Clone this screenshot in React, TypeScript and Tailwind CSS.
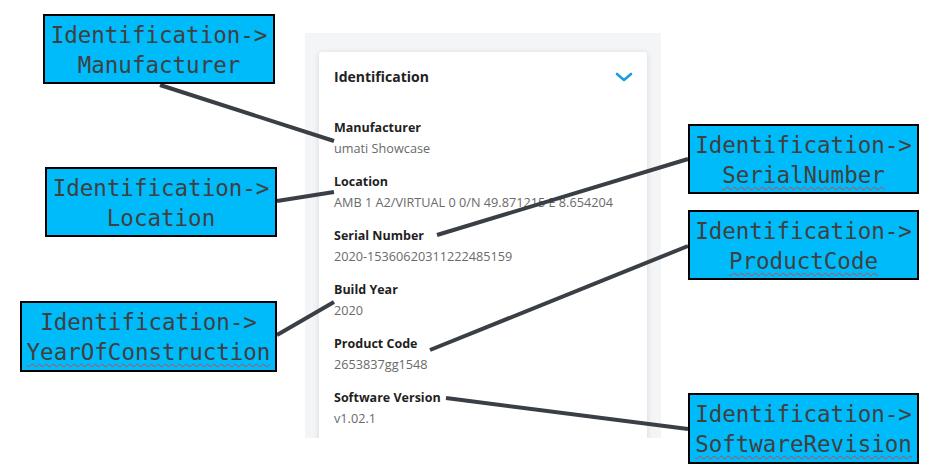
import React from "react";

type Callout = {
  left: number;
  top: number;
  width: number;
  height: number;
  field: string;
  squiggle: boolean;
};

const callouts: Callout[] = [
  { left: 43, top: 14, width: 232, height: 70, field: "Manufacturer", squiggle: false },
  { left: 45, top: 167, width: 232, height: 70, field: "Location", squiggle: false },
  { left: 20, top: 301, width: 257, height: 71, field: "YearOfConstruction", squiggle: true },
  { left: 688, top: 124, width: 231, height: 70, field: "SerialNumber", squiggle: true },
  { left: 688, top: 210, width: 231, height: 70, field: "ProductCode", squiggle: true },
  { left: 688, top: 393, width: 231, height: 71, field: "SoftwareRevision", squiggle: true },
];

// connector lines: [x1, y1, x2, y2]
const connectors: [number, number, number, number][] = [
  [160, 85, 334, 141],
  [277, 201, 334, 192],
  [437, 235, 688, 159],
  [277, 335, 334, 302],
  [430, 350, 688, 246],
  [446, 398, 688, 429],
];

const fields = [
  { label: "Manufacturer", value: "umati Showcase" },
  { label: "Location", value: "AMB 1 A2/VIRTUAL 0 0/N 49.871215 E 8.654204" },
  { label: "Serial Number", value: "2020-15360620311222485159" },
  { label: "Build Year", value: "2020" },
  { label: "Product Code", value: "2653837gg1548" },
  { label: "Software Version", value: "v1.02.1" },
];

function IdentificationCard() {
  return (
    <div className="ml-[305px] mt-[33px] h-[405px] w-[356px] overflow-hidden bg-[#f4f5f7] px-[14px] pt-[19px]">
      <div className="h-[420px] rounded-[3px] bg-white px-[15px] shadow-[0_1px_6px_rgba(0,0,0,0.12)]">
        <div className="flex items-center justify-between pt-[15px]">
          <h2 className="text-[14px] font-bold leading-[20px] text-[#222]">Identification</h2>
          <svg width="18" height="10" viewBox="0 0 18 10" className="mr-[-1px]">
            <path d="M2 2 L9 8 L16 2" fill="none" stroke="#1a9fe3" strokeWidth="2.6" strokeLinecap="round" strokeLinejoin="round" />
          </svg>
        </div>
        <div className="mt-[31px] flex flex-col gap-[14px]">
          {fields.map((f) => (
            <div key={f.label}>
              <p className="text-[12.5px] font-bold leading-[20px] text-[#1f1f1f]">{f.label}</p>
              <p className="text-[12.7px] leading-[20px] text-[#6a6a6a]">{f.value}</p>
            </div>
          ))}
        </div>
      </div>
    </div>
  );
}

export default function App() {
  return (
    <div className="relative h-[474px] w-[929px] overflow-hidden bg-white font-['Open_Sans',sans-serif]">
      <IdentificationCard />

      <svg className="absolute left-0 top-0" width="929" height="474">
        {connectors.map(([x1, y1, x2, y2], i) => (
          <line key={i} x1={x1} y1={y1} x2={x2} y2={y2} stroke="#3a3f46" strokeWidth="4" strokeLinecap="butt" />
        ))}
      </svg>

      {callouts.map((c) => (
        <div
          key={c.field}
          className="absolute flex flex-col items-center border-2 border-black bg-[#00bbfa] pt-[4px] font-['DejaVu_Sans_Mono',monospace] text-[22.5px] leading-[30px] text-[#404040]"
          style={{ left: c.left, top: c.top, width: c.width, height: c.height }}
        >
          <span>Identification-&gt;</span>
          <span
            className={
              c.squiggle
                ? "underline decoration-[#e23b3b] decoration-wavy decoration-[1px] underline-offset-[3px]"
                : ""
            }
          >
            {c.field}
          </span>
        </div>
      ))}
    </div>
  );
}
